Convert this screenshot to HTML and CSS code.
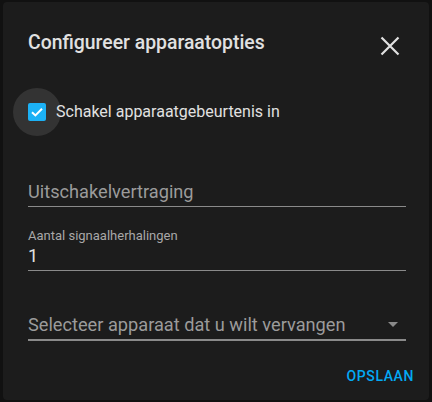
FILE: index.html
```html
<!DOCTYPE html>
<html lang="nl">
<head>
<meta charset="utf-8">
<title>Configureer apparaatopties</title>
<link rel="stylesheet" href="styles.css">
</head>
<body>
<div class="dialog">
  <div class="header">
    <h2 class="title">Configureer apparaatopties</h2>
    <svg class="close" viewBox="0 0 24 24" width="24" height="24" aria-label="Sluiten">
      <path d="M3.5 3.5 L20.5 20.5 M20.5 3.5 L3.5 20.5" stroke="#e1e1e1" stroke-width="2.2" fill="none"/>
    </svg>
  </div>
  <div class="check-row">
    <span class="checkbox">
      <svg viewBox="0 0 18 18" width="18" height="18">
        <path d="M4 9.2 L7.4 12.4 L14 5.8" stroke="#ffffff" stroke-width="2" fill="none"/>
      </svg>
    </span>
    <span class="check-label">Schakel apparaatgebeurtenis in</span>
  </div>
  <div class="field field-empty">
    <span class="placeholder">Uitschakelvertraging</span>
  </div>
  <div class="field field-filled">
    <span class="small-label">Aantal signaalherhalingen</span>
    <span class="value">1</span>
  </div>
  <div class="field field-select">
    <span class="placeholder">Selecteer apparaat dat u wilt vervangen</span>
    <svg class="arrow" viewBox="0 0 10 5" width="10" height="5"><path d="M0 0 L10 0 L5 5 Z" fill="#8a8a8a"/></svg>
  </div>
  <div class="actions">
    <span class="button">OPSLAAN</span>
  </div>
</div>
</body>
</html>
```
FILE: styles.css
```css
html, body {
  margin: 0;
  padding: 0;
  background: #111111;
}
body {
  width: 432px;
  height: 402px;
  overflow: hidden;
  font-family: Roboto, "Noto Sans", sans-serif;
}
.dialog {
  margin: 2px 3px 0 3px;
  width: 426px;
  height: 398px;
  box-sizing: border-box;
  background: #1c1c1c;
  border-radius: 4px;
  padding: 29px 23px 0 25px;
  display: flex;
  flex-direction: column;
}
.header {
  display: flex;
  justify-content: space-between;
  align-items: flex-start;
  height: 24px;
}
.title {
  margin: 0;
  font-size: 19.4px;
  line-height: 24px;
  font-weight: 500;
  color: #e1e1e1;
}
.close {
  margin-top: 2.5px;
  margin-right: 4.5px;
  display: block;
}
.check-row {
  margin-top: 48px;
  display: flex;
  align-items: center;
  height: 18px;
}
.checkbox {
  position: relative;
  width: 18px;
  height: 18px;
  border-radius: 2px;
  background: #03a9f4;
  flex: none;
}
.checkbox::before {
  content: "";
  position: absolute;
  left: -15px;
  top: -15px;
  width: 48px;
  height: 48px;
  border-radius: 50%;
  background: rgba(255,255,255,0.1);
}
.checkbox svg {
  position: relative;
  display: block;
}
.check-label {
  margin-left: 10px;
  font-size: 16px;
  line-height: 20px;
  color: #e1e1e1;
}
.field {
  border-bottom: 1px solid #8a8a8a;
  display: flex;
  flex-direction: column;
}
.field-empty {
  margin-top: 58px;
  height: 24px;
  justify-content: flex-end;
  padding-bottom: 3px;
}
.placeholder {
  font-size: 18.2px;
  line-height: 22px;
  color: #9b9b9b;
}
.field-filled {
  margin-top: 21px;
  height: 42px;
}
.small-label {
  font-size: 13px;
  line-height: 16px;
  color: #a8a8a8;
}
.value {
  font-size: 18px;
  line-height: 22px;
  color: #e1e1e1;
  margin-top: 1px;
}
.field-select {
  margin-top: 42px;
  height: 26px;
  flex-direction: row;
  justify-content: space-between;
  align-items: flex-start;
  border-bottom: 2px solid #8a8a8a;
}
.field-select .placeholder {
  margin-top: 1px;
}
.arrow {
  display: block;
  margin-top: 9px;
  margin-right: 8px;
}
.actions {
  margin-top: 27px;
  display: flex;
  justify-content: flex-end;
  margin-right: -8px;
}
.button {
  font-size: 14px;
  line-height: 16px;
  font-weight: 500;
  letter-spacing: 0.6px;
  color: #03a9f4;
}
```
